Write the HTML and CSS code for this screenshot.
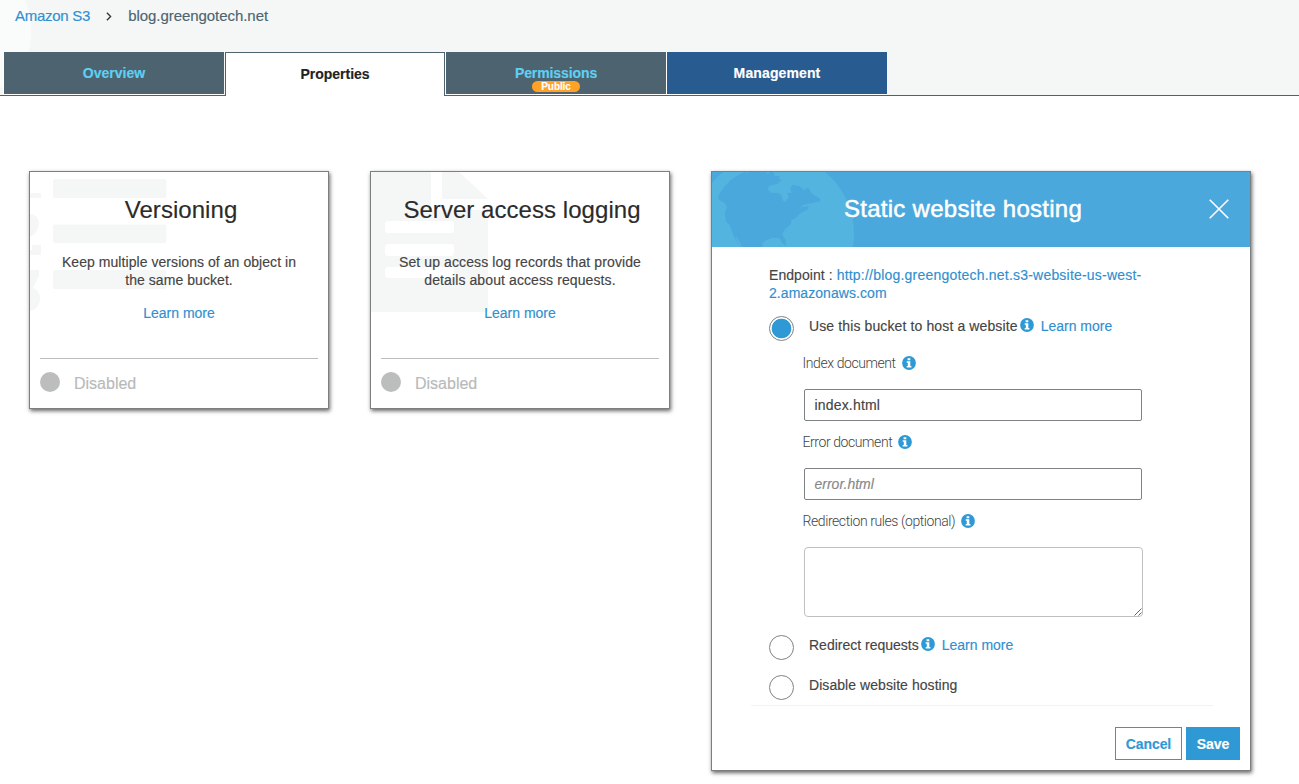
FILE: index.html
```html
<!DOCTYPE html>
<html lang="en">
<head>
<meta charset="utf-8">
<title>Amazon S3 - blog.greengotech.net</title>
<link rel="stylesheet" href="styles.css">
</head>
<body>
<svg class="defs" width="0" height="0" aria-hidden="true">
  <symbol id="info" viewBox="0 0 14 14">
    <circle cx="7" cy="7" r="6.9" fill="#2f99d5"/>
    <path d="M5.6 2.3h2.7v2H5.6zM4.7 5.3h3.6v4.6h1.1v1.5H4.7V9.9h1.1V6.8H4.7z" fill="#fff"/>
  </symbol>
</svg>
<header class="top">
  <svg class="mark" viewBox="0 0 40 95" width="40" height="95"><path d="M0 0H25Q33 20 31 36Q29 72 0 88Z" fill="#fafcfc"/></svg>
  <nav class="crumbs">
    <a class="t-s3" href="#">Amazon S3</a>
    <svg class="chev" width="6" height="9" viewBox="0 0 6 9"><path d="M.9.8 4.6 4.5.9 8.2" fill="none" stroke="#333" stroke-width="1.3"/></svg>
    <span class="t-bucket">blog.greengotech.net</span>
  </nav>
  <div class="tabs">
    <div class="tab"><span>Overview</span></div>
    <div class="tab active"><span>Properties</span></div>
    <div class="tab"><span class="t-pe">Permissions</span><span class="badge">Public</span></div>
    <div class="tab mgmt"><span class="t-ma">Management</span></div>
  </div>
</header>
<main class="cards">
  <section class="card">
    <svg class="art" width="298" height="150" viewBox="0 0 298 150" fill="#f5f7f7">
      <rect x="23" y="7" width="113.500" height="19" rx="2"/><rect x="23" y="52.500" width="113.500" height="18.500" rx="2"/><rect x="23" y="98" width="113.500" height="19" rx="2"/>
      <path d="M0 21H11V26H0ZM0 42Q9 43 9 52Q8 61 0 65ZM2 73H11V83H0V78H2ZM0 98H9V104L3 116Q11 119 10 129Q8 137 0 139Z"/>
    </svg>
    <h2>Versioning</h2>
    <p><span class="t-k1">Keep multiple versions of an object in</span><br><span class="t-k1">the same bucket.</span></p>
    <a class="more" href="#">Learn more</a>
    <footer><i class="dot"></i><span>Disabled</span></footer>
  </section>
  <section class="card">
    <svg class="art" width="298" height="150" viewBox="0 0 298 150">
      <path d="M0 0H88L117 27V140H0Z" fill="#f5f7f7"/>
      <path d="M60 0H71V27H117V38H60Z" fill="#fff"/>
      <g fill="#fff"><rect x="14" y="49" width="69" height="12" rx="3"/><rect x="14" y="72" width="69" height="12" rx="3"/><rect x="14" y="95" width="69" height="11" rx="3"/></g>
    </svg>
    <h2>Server access logging</h2>
    <p><span class="t-s1">Set up access log records that provide</span><br><span class="t-s1">details about access requests.</span></p>
    <a class="more" href="#">Learn more</a>
    <footer><i class="dot"></i><span>Disabled</span></footer>
  </section>
  <section class="card hosting">
    <div class="bar">
      <svg class="art" width="144" height="75" viewBox="36 36 432 225">
        <circle cx="222" cy="221" r="240" fill="#54b4e0"/>
        <path fill="#4aa8dc" d="M53 110 73 80 92 60 118 43 135 36 141 40 148 36H200L203 44 209 36H218L224 42 222 48 241 47 236 55 246 60 232 72 207 77 203 88 212 98 236 99 245 107 247 121 256 125 266 112 262 99 276 98 270 85 279 74 299 79 311 90 324 82 335 100 360 116 360 124 336 130 311 134 299 143 327 138 322 149 302 159 286 175 274 180 273 192 255 208 246 222 257 239 258 257 247 250 238 235 216 233 200 240 187 248 187 262H127L120 247 106 224 110 240 124 262 112 247 101 228 92 204 90 197 79 186 74 160 81 141 74 129 57 120Z"/>
      </svg>
      <h2>Static website hosting</h2>
      <svg class="close" width="20" height="20" viewBox="0 0 20 20"><path d="M.7.7 19.300 19.300M19.300.7.7 19.300" stroke="#fff" stroke-width="1.600"/></svg>
    </div>
    <div class="form">
      <div class="endpoint"><span class="t-ep">Endpoint :</span> <a class="t-u1" href="#">http://blog.greengotech.net.s3-website-us-west-</a><br><a class="t-k1" href="#">2.amazonaws.com</a></div>
      <div class="opt first"><i class="radio on"></i><div class="otext"><span class="t-use">Use this bucket to host a website</span><svg class="inf"><use href="#info"/></svg><a href="#">Learn more</a></div></div>
      <div class="fields">
        <div class="lab"><span>Index document</span><svg class="inf"><use href="#info"/></svg></div>
        <div class="input"><span class="t-ih">index.html</span></div>
        <div class="lab"><span>Error document</span><svg class="inf"><use href="#info"/></svg></div>
        <div class="input ph"><span>error.html</span></div>
        <div class="lab"><span>Redirection rules (optional)</span><svg class="inf"><use href="#info"/></svg></div>
        <div class="area"><svg width="8" height="8" viewBox="0 0 8 8"><path d="M.5 7.500 7.500.5M4.500 7.500 7.500 4.500" stroke="#555" stroke-width=".9"/></svg></div>
      </div>
      <div class="opt second"><i class="radio"></i><div class="otext"><span>Redirect requests</span><svg class="inf"><use href="#info"/></svg><a href="#">Learn more</a></div></div>
      <div class="opt third"><i class="radio"></i><div class="otext"><span class="t-k1">Disable website hosting</span></div></div>
    </div>
    <div class="rule"></div>
    <div class="actions"><button class="btn cancel">Cancel</button><button class="btn save">Save</button></div>
  </section>
</main>
</body>
</html>
```

FILE: styles.css
```css
* { box-sizing: border-box; }
body { margin: 0; background: #fff; color: #444; font: 14px/18px "Liberation Sans", Arial, sans-serif; height: 784px; overflow: hidden; -webkit-text-stroke: .15px currentColor; }
a { color: #2f8fd0; text-decoration: none; }
h2, p { margin: 0; font-weight: 400; }
span, a { white-space: nowrap; }
.defs { position: absolute; }
.top { position: relative; height: 96px; background: #f5f7f7; border-bottom: 1px solid #4d6470; }
.mark { position: absolute; left: 0; top: 0; }
.crumbs { position: relative; display: flex; align-items: center; height: 32px; padding-left: 15px; font-size: 15px; color: #4d6470; }
.chev { margin: 1px 16px 0; }
.t-s3 { letter-spacing: -.27px; }
.t-bucket { letter-spacing: -.05px; }
.t-k1 { letter-spacing: .06px; }
.t-s1 { letter-spacing: .1px; }
.t-u1 { letter-spacing: .21px; }
.t-ep { letter-spacing: .07px; }
.t-use { letter-spacing: .12px; }
.t-ih { letter-spacing: .18px; }
.t-pe { letter-spacing: -.1px; }
.t-ma { letter-spacing: .12px; }
.tabs { position: relative; display: flex; gap: 1px; margin-top: 20px; padding-left: 4px; }
.tab { display: flex; flex-direction: column; align-items: center; width: 220px; height: 42px; padding-top: 12px; background: #4d6470; color: #5fd0f3; font-weight: 700; box-shadow: 0 0 0 1px #fff; clip-path: inset(0 0 -1px -1px); }
.tab.active { height: 44px; background: #fff; color: #222; border: 1px solid #4d6470; border-bottom: 0; box-shadow: none; clip-path: none; }
.tab.mgmt { background: #285b90; color: #fff; }
.badge { width: 48px; height: 11px; margin-top: -1px; border-radius: 6px; background: #ffa226; color: #fff; font-size: 10px; line-height: 12px; text-align: center; letter-spacing: -.1px; }
.cards { display: flex; align-items: flex-start; gap: 41px; padding: 75px 0 0 29px; }
.card { position: relative; display: flex; flex-direction: column; align-items: center; flex: none; width: 300px; height: 238px; border: 1px solid #7b7f80; background: #fff; box-shadow: 1px 2px 4px rgba(0,0,0,.6); text-align: center; }
.art { position: absolute; left: 0; top: 0; }
.card h2 { position: relative; margin-top: 22px; font-size: 24px; line-height: 32px; padding-left: 4px; color: #2b2b2b; letter-spacing: .05px; }
.card p { position: relative; margin-top: 27px; }
.more { position: relative; margin-top: 15px; }
.card footer { display: flex; align-items: center; width: 278px; height: 50px; margin-top: 36px; border-top: 1px solid #bbbdbd; font-size: 16px; color: #b8baba; }
.dot { width: 20px; height: 20px; margin: 0 14px 3px 0; border-radius: 50%; background: #bcbebe; }
.hosting { width: 540px; height: 600px; align-items: stretch; text-align: left; }
.bar { position: relative; display: flex; align-items: center; height: 75px; padding: 0 21px 2px 132px; background: #4aa8dc; }
.card .bar h2 { margin: 0 auto 0 0; padding: 0; color: #fff; letter-spacing: .27px; -webkit-text-stroke: .5px #fff; }
.form { padding: 19px 57px 0; }
.opt { display: flex; align-items: flex-start; height: 40px; }
.radio { width: 25px; height: 25px; margin-right: 15px; border: 1px solid #7d8384; border-radius: 50%; }
.radio.on { background: radial-gradient(circle, #2f99d5 9.4px, #fff 10.2px); }
.otext { display: flex; align-items: center; margin-top: 1px; height: 18px; }
.first { margin-top: 14px; height: 37px; }
.inf { width: 14px; height: 14px; margin: -2px 7px 0 2px; }
.fields { width: 339px; margin-left: 35px; }
.lab { display: flex; align-items: center; height: 20px; margin: 0 0 16px -1.500px; font-family: Roboto, sans-serif; font-weight: 300; color: #444; letter-spacing: -.42px; -webkit-text-stroke: 0; }
.lab .inf { margin: 0 0 0 6px; }
.input { display: flex; align-items: center; width: 338px; height: 32px; margin-bottom: 11px; padding-left: 9.500px; border: 1px solid #7d8384; border-radius: 2px; }
.ph { color: #888; font-style: italic; }
.area { display: flex; align-items: flex-end; justify-content: flex-end; height: 70px; border: 1px solid #bfc0c0; border-radius: 4px; }
.second { margin-top: 18px; }
.third { height: 30px; }
.rule { height: 1px; margin: 0 37px 0 39px; background: #f3f3f3; }
.actions { display: flex; justify-content: flex-end; gap: 4px; margin: 21px 10px 0 0; }
.btn { height: 33px; padding: 0; border: 1px solid #2f99d5; font: 700 14px/18px "Liberation Sans", Arial, sans-serif; }
.cancel { width: 67px; background: #fff; color: #2f99d5; letter-spacing: -.1px; }
.save { width: 54px; background: #2f99d5; color: #fff; }
```
